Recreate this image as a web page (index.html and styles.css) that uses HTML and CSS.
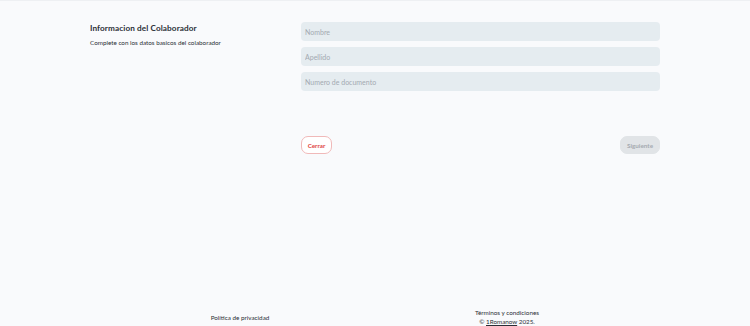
FILE: index.html
```html
<!DOCTYPE html>
<html lang="es">
<head>
<meta charset="utf-8">
<link rel="stylesheet" href="styles.css">
</head>
<body>
<div class="page">
  <main class="main">
    <section class="form-row">
      <div class="intro">
        <h1 class="title">Informacion del Colaborador</h1>
        <p class="subtitle">Complete con los datos basicos del colaborador</p>
      </div>
      <div class="fields">
        <input class="field" type="text" placeholder="Nombre">
        <input class="field" type="text" placeholder="Apellido">
        <input class="field" type="text" placeholder="Numero de documento">
      </div>
    </section>
    <div class="actions">
      <button class="btn btn-close">Cerrar</button>
      <button class="btn btn-next">Siguiente</button>
    </div>
  </main>
  <footer class="footer">
    <div class="foot-col foot-left"><a class="foot-link">Política de privacidad</a></div>
    <div class="foot-col foot-right">
      <a class="foot-link">Términos y condiciones</a>
      <span class="copy">© <u>1Romanow</u> 2025.</span>
    </div>
  </footer>
</div>
</body>
</html>
```
FILE: styles.css
```css
* { box-sizing: border-box; }
html, body { margin: 0; padding: 0; }
body {
  background: #f9fafc;
  font-family: Lato, "Noto Sans", sans-serif;
  color: #2b2f36;
  border-top: 1px solid #eef0f3;
}
.page {
  height: 325px;
  display: flex;
  flex-direction: column;
  justify-content: space-between;
}
.main {
  padding: 21px 90px 0 90px;
}
.form-row {
  display: flex;
}
.intro {
  width: 211px;
  padding-top: 1px;
}
.title {
  margin: 0;
  font-size: 8.2px;
  font-weight: 700;
  line-height: 10px;
  color: #2b2f36;
  letter-spacing: 0.1px;
}
.subtitle {
  margin: 6px 0 0;
  font-size: 6.3px;
  line-height: 8px;
  color: #2b2f36;
}
.fields {
  width: 359px;
  display: flex;
  flex-direction: column;
  gap: 6px;
}
.field {
  display: block;
  width: 100%;
  height: 19px;
  border: none;
  border-radius: 4px;
  background: #e5ecf0;
  padding: 0 4px;
  font-family: inherit;
  font-size: 7px;
  color: #333;
  outline: none;
}
.field::placeholder { color: #a3a9b0; }
.actions {
  margin-left: 211px;
  width: 359px;
  margin-top: 45px;
  display: flex;
  justify-content: space-between;
}
.btn {
  height: 18px;
  border-radius: 7px;
  font-family: inherit;
  font-size: 6.3px;
  font-weight: 700;
  padding: 0;
  cursor: pointer;
}
.btn-close {
  width: 31px;
  background: #fff;
  border: 1px solid #f0b9b9;
  color: #e0443f;
}
.btn-next {
  width: 40px;
  background: #e1e4e7;
  border: 1px solid #e1e4e7;
  color: #a5aab0;
}
.footer {
  display: flex;
  padding-bottom: 0;
}
.foot-col {
  display: flex;
  flex-direction: column;
  align-items: center;
  font-size: 6.3px;
  line-height: 9px;
  color: #2b2f36;
}
.foot-left { width: 414px; padding-left: 66px; justify-content: flex-end; padding-bottom: 4px; }
.foot-right { width: 186px; }
.foot-link { color: #2b2f36; }
.copy u { text-decoration: underline; }
```
